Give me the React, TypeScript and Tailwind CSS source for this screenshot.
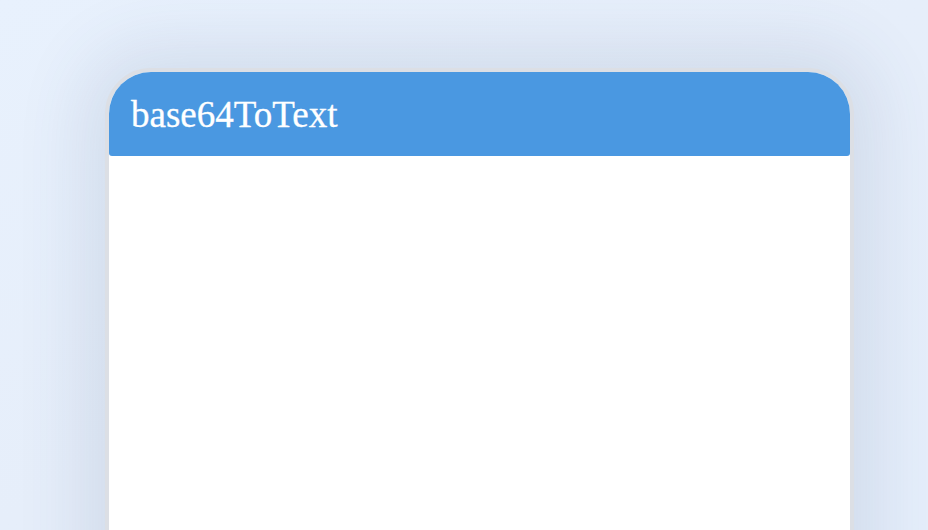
export default function App() {
  return (
    <div className="h-[530px] w-full overflow-hidden bg-gradient-to-br from-[#e8f1fd] via-[#e6eefa] to-[#e5eefb] pt-[68px]">
      <div className="ml-[105px] h-[600px] w-[749px] rounded-t-[46px] border-4 border-[#dcdfe5] bg-white shadow-[0_0_70px_20px_rgba(60,80,120,0.12)]">
        <div className="flex h-[84px] items-center rounded-t-[42px] rounded-b-[3px] bg-[#4a98e1] px-[22px]">
          <h1 className="font-['Liberation_Serif',serif] text-[37px] leading-none text-white [-webkit-text-stroke:0.3px_white]">base64ToText</h1>
        </div>
        <div className="bg-white" />
      </div>
    </div>
  );
}
